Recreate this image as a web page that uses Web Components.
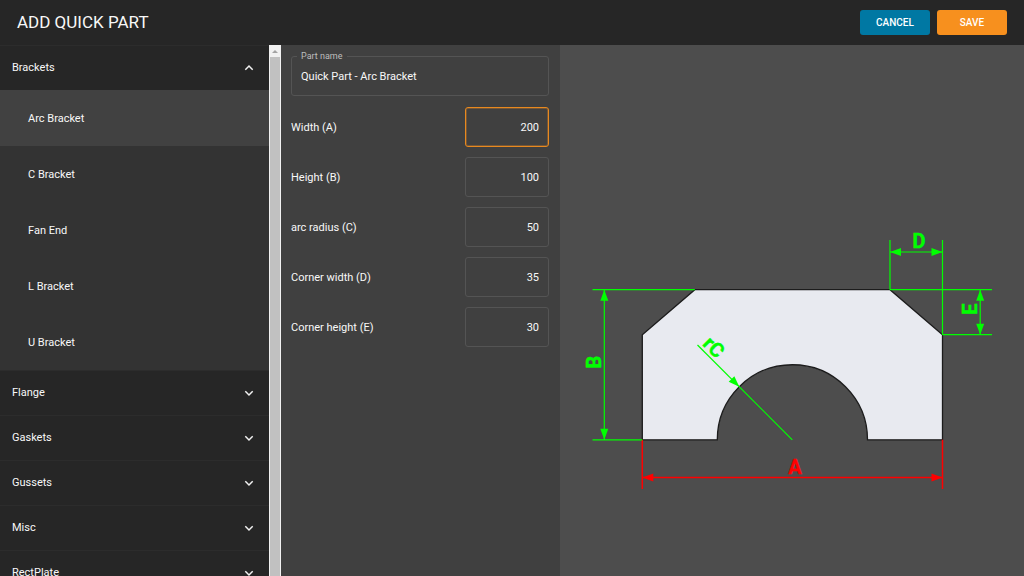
<!DOCTYPE html>
<html lang="en">
<head>
<meta charset="utf-8">
<title>Add Quick Part</title>
<style>
  html, body {
    height: 100%;
    margin: 0;
  }
  body {
    background: #404040;
    color: #f8f8f8;
    font: 11px/16px Roboto, "Liberation Sans", sans-serif;
  }
</style>
</head>
<body>
<quick-part-dialog>
  <action-button slot="actions" variant="secondary">CANCEL</action-button>
  <action-button slot="actions">SAVE</action-button>

  <part-sidebar slot="sidebar">
    <part-group label="Brackets" open>
      <part-item selected>Arc Bracket</part-item>
      <part-item>C Bracket</part-item>
      <part-item>Fan End</part-item>
      <part-item>L Bracket</part-item>
      <part-item>U Bracket</part-item>
    </part-group>
    <part-group label="Flange"></part-group>
    <part-group label="Gaskets"></part-group>
    <part-group label="Gussets"></part-group>
    <part-group label="Misc"></part-group>
    <part-group label="RectPlate"></part-group>
  </part-sidebar>

  <part-form slot="form">
    <name-field label="Part name" value="Quick Part - Arc Bracket"></name-field>
    <dimension-field label="Width (A)" value="200" active></dimension-field>
    <dimension-field label="Height (B)" value="100"></dimension-field>
    <dimension-field label="arc radius (C)" value="50"></dimension-field>
    <dimension-field label="Corner width (D)" value="35"></dimension-field>
    <dimension-field label="Corner height (E)" value="30"></dimension-field>
  </part-form>

  <part-preview slot="preview"></part-preview>
</quick-part-dialog>

<script>
class QuickPartDialog extends HTMLElement {
    constructor() {
        super();
        this.attachShadow({ mode: 'open' });
        this.shadowRoot.innerHTML = `
      <style>
        :host {
          display: grid;
          grid-template-rows: auto minmax(0, 1fr);
          height: 100vh;
          overflow: hidden;
        }
        header {
          display: flex;
          align-items: center;
          gap: 7px;
          padding: 10px 17px;
          background: #262626;
        }
        h1 {
          flex: 1;
          margin: 0;
          font-size: 17px;
          font-weight: 400;
          line-height: 25px;
        }
        main {
          display: grid;
          grid-template-columns: 281px 279px minmax(0, 1fr);
          min-height: 0;
        }
      </style>
      <header>
        <h1>ADD QUICK PART</h1>
        <slot name="actions"></slot>
      </header>
      <main>
        <slot name="sidebar"></slot>
        <slot name="form"></slot>
        <slot name="preview"></slot>
      </main>
    `;
    }
}

class ActionButton extends HTMLElement {
    constructor() {
        super();
        this.attachShadow({ mode: 'open' });
        this.shadowRoot.innerHTML = `
      <style>
        :host {
          display: block;
          --fill: #f7901e;
        }
        :host([variant="secondary"]) {
          --fill: #0078a3;
        }
        button {
          display: block;
          min-width: 70px;
          height: 25px;
          padding: 0 8px;
          border: 0;
          border-radius: 3px;
          background: var(--fill);
          color: #fff;
          font: 500 10px/16px Roboto, "Liberation Sans", sans-serif;
          cursor: pointer;
        }
      </style>
      <button type="button"><slot></slot></button>
    `;
    }
}

class PartSidebar extends HTMLElement {
    constructor() {
        super();
        this.attachShadow({ mode: 'open' });
        this.shadowRoot.innerHTML = `
      <style>
        :host {
          display: grid;
          grid-template-columns: minmax(0, 1fr) 12px;
          min-height: 0;
          background: #262626;
        }
        nav {
          overflow-y: auto;
          scrollbar-width: none;
        }
        .scrollbar {
          display: flex;
          flex-direction: column;
          background: #f1f1f1;
        }
        .arrow {
          display: block;
          width: 12px;
          height: 12px;
          fill: #a3a3a3;
        }
        .thumb {
          flex: 1;
          margin: 0 1px;
          background: #c1c1c1;
        }
      </style>
      <nav aria-label="Parts"><slot></slot></nav>
      <div class="scrollbar" aria-hidden="true">
        <svg class="arrow" viewBox="0 0 12 12"><path d="M3 8 6 5l3 3z"/></svg>
        <div class="thumb"></div>
      </div>
    `;
    }
}

class PartGroup extends HTMLElement {
    constructor() {
        super();
        this.attachShadow({ mode: 'open' });
    }

    connectedCallback() {
        this.render();
        this.shadowRoot.querySelector('button').addEventListener('click', () => {
            this.toggleAttribute('open');
            this.update();
        });
        this.update();
    }

    update() {
        const open = this.hasAttribute('open');
        this.shadowRoot.querySelector('button').setAttribute('aria-expanded', open);
    }

    render() {
        this.shadowRoot.innerHTML = `
      <style>
        :host {
          display: block;
        }
        button {
          display: flex;
          align-items: center;
          justify-content: space-between;
          box-sizing: border-box;
          width: 100%;
          height: 45px;
          padding: 0 14px 0 12px;
          border: 0;
          border-top: 1px solid #2c2c2c;
          background: #262626;
          color: inherit;
          font: inherit;
          cursor: pointer;
        }
        svg {
          width: 12px;
          height: 12px;
          fill: none;
          stroke: #f2f2f2;
          stroke-width: 1.5;
        }
        :host([open]) svg {
          transform: rotate(180deg);
        }
        .items {
          display: none;
          background: #333;
        }
        :host([open]) .items {
          display: block;
        }
      </style>
      <button type="button">
        <span>${this.getAttribute('label')}</span>
        <svg viewBox="0 0 12 12" aria-hidden="true"><path d="M2.3 4.3 6 8l3.7-3.7"/></svg>
      </button>
      <div class="items"><slot></slot></div>
    `;
    }
}

class PartItem extends HTMLElement {
    constructor() {
        super();
        this.attachShadow({ mode: 'open' });
        this.shadowRoot.innerHTML = `
      <style>
        :host {
          display: block;
        }
        a {
          display: block;
          padding: 21px 28px 19px;
          color: inherit;
          text-decoration: none;
        }
        :host([selected]) a {
          background: #414141;
        }
      </style>
      <a href="#"><slot></slot></a>
    `;
    }
}

class PartForm extends HTMLElement {
    constructor() {
        super();
        this.attachShadow({ mode: 'open' });
        this.shadowRoot.innerHTML = `
      <style>
        :host {
          display: block;
          overflow: hidden;
          background: #404040;
        }
        form {
          display: flex;
          flex-direction: column;
          gap: 10px;
          padding: 11px 11px 11px 10px;
        }
      </style>
      <form><slot></slot></form>
    `;
    }
}

class NameField extends HTMLElement {
    constructor() {
        super();
        this.attachShadow({ mode: 'open' });
    }

    connectedCallback() {
        this.shadowRoot.innerHTML = `
      <style>
        :host {
          display: block;
          position: relative;
          margin-bottom: 1px;
        }
        label {
          position: absolute;
          top: -6px;
          left: 6px;
          padding: 0 4px;
          background: #404040;
          color: #bdbdbd;
          font-size: 9px;
          line-height: 12px;
        }
        input {
          display: block;
          box-sizing: border-box;
          width: 100%;
          height: 40px;
          padding: 0 9px;
          border: 1px solid #545454;
          border-radius: 3px;
          outline: 0;
          background: transparent;
          color: inherit;
          font: inherit;
        }
      </style>
      <input id="field" type="text" value="${this.getAttribute('value')}">
      <label for="field">${this.getAttribute('label')}</label>
    `;
    }
}

class DimensionField extends HTMLElement {
    constructor() {
        super();
        this.attachShadow({ mode: 'open' });
    }

    connectedCallback() {
        this.render();
        if (this.hasAttribute('active')) {
            const input = this.shadowRoot.querySelector('input');
            input.focus();
            input.setSelectionRange(input.value.length, input.value.length);
        }
    }

    render() {
        this.shadowRoot.innerHTML = `
      <style>
        :host {
          display: flex;
          align-items: center;
          justify-content: space-between;
        }
        label {
          padding-top: 2px;
        }
        input {
          box-sizing: border-box;
          width: 84px;
          height: 40px;
          padding: 0 9px;
          border: 1px solid #545454;
          border-radius: 3px;
          outline: 0;
          background: transparent;
          color: inherit;
          font: inherit;
          text-align: right;
        }
        input:focus {
          border-color: #e8891f;
          box-shadow: inset 0 0 0 1px rgba(247, 144, 30, 0.3);
        }
      </style>
      <label for="field">${this.getAttribute('label')}</label>
      <input id="field" type="text" inputmode="numeric" value="${this.getAttribute('value')}">
    `;
    }
}

class PartPreview extends HTMLElement {
    constructor() {
        super();
        this.attachShadow({ mode: 'open' });
        this.shadowRoot.innerHTML = `
      <style>
        :host {
          display: block;
          min-height: 0;
          background: #4d4d4d;
        }
        svg {
          display: block;
          width: 100%;
          height: 100%;
        }
        .part {
          fill: #e8eaf0;
          stroke: #1c1c1c;
          stroke-width: 1.3;
        }
        .dim {
          fill: none;
          stroke: #0f0;
          stroke-width: 1.2;
        }
        .tip, text {
          fill: #0f0;
        }
        .active .dim {
          stroke: #f00;
          stroke-width: 1.5;
        }
        .active .tip, .active text {
          fill: #f00;
        }
        text {
          font: 700 20px Roboto, "Liberation Sans", sans-serif;
          text-anchor: middle;
          stroke: #0f0;
          stroke-width: 0.4;
        }
        .active text {
          stroke: #f00;
        }
      </style>
      <svg viewBox="0 0 464 531" role="img" aria-label="Arc Bracket drawing">
        <defs>
          <path id="tip" d="M0 0 11-4V4z"/>
        </defs>
        <path class="part" d="M82.3 394.8V289.7L134.8 244.7H330L382.5 289.7V394.8H307.5A75 75 0 0 0 157.3 394.8z"/>

        <!-- A: width -->
        <g class="active">
          <path class="dim" d="M82.3 394.8V444M382.5 394.8V444M82.3 432.5H382.5"/>
          <use class="tip" href="#tip" transform="translate(82.3 432.5)"/>
          <use class="tip" href="#tip" transform="translate(382.5 432.5) rotate(180)"/>
          <text x="235" y="429">A</text>
        </g>

        <!-- B: height -->
        <path class="dim" d="M32.5 244.7H134.8M32.5 394.8H82.3M44.3 244.7V394.8"/>
        <use class="tip" href="#tip" transform="translate(44.3 244.7) rotate(90)"/>
        <use class="tip" href="#tip" transform="translate(44.3 394.8) rotate(-90)"/>
        <text transform="translate(41 317) rotate(-90)">B</text>

        <!-- C: arc radius -->
        <path class="dim" d="M232.3 394.8 137.5 300"/>
        <use class="tip" href="#tip" transform="translate(179.3 341.8) rotate(225)"/>
        <text transform="translate(149 307) rotate(45)">rC</text>

        <!-- D: corner width -->
        <path class="dim" d="M330 195V244.7M382.5 195V289.7M330 207H382.5"/>
        <use class="tip" href="#tip" transform="translate(330 207)"/>
        <use class="tip" href="#tip" transform="translate(382.5 207) rotate(180)"/>
        <text x="359" y="203">D</text>

        <!-- E: corner height -->
        <path class="dim" d="M330 244.7H432M382.5 289.7H432M420.2 244.7V289.7"/>
        <use class="tip" href="#tip" transform="translate(420.2 244.7) rotate(90)"/>
        <use class="tip" href="#tip" transform="translate(420.2 289.7) rotate(-90)"/>
        <text transform="translate(417 264) rotate(-90)">E</text>
      </svg>
    `;
    }
}

customElements.define('quick-part-dialog', QuickPartDialog);
customElements.define('action-button', ActionButton);
customElements.define('part-sidebar', PartSidebar);
customElements.define('part-group', PartGroup);
customElements.define('part-item', PartItem);
customElements.define('part-form', PartForm);
customElements.define('name-field', NameField);
customElements.define('dimension-field', DimensionField);
customElements.define('part-preview', PartPreview);
</script>
</body>
</html>
